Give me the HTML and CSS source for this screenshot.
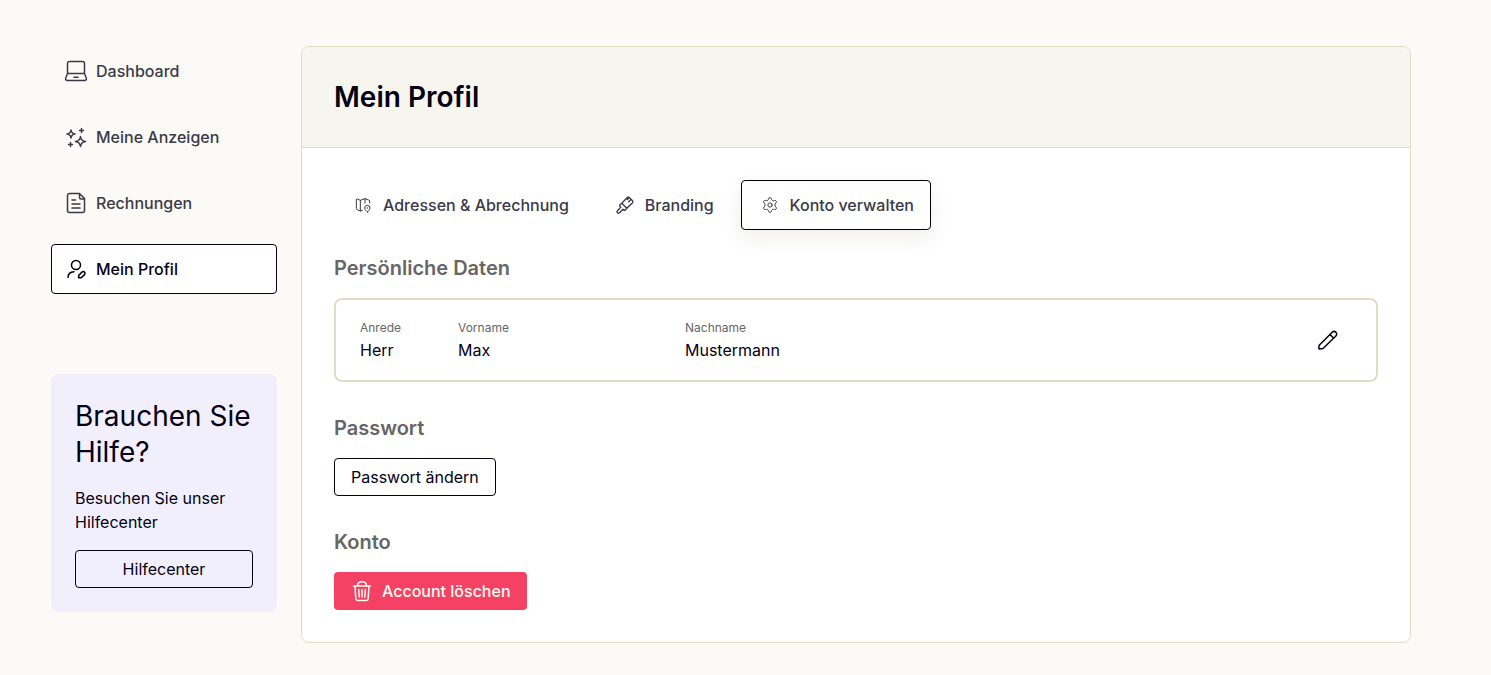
FILE: index.html
```html
<!DOCTYPE html>
<html lang="de">
<head>
    <meta charset="UTF-8">
    <meta name="viewport" content="width=device-width, initial-scale=1.0">
    <title>Mein Profil</title>
    <link rel="stylesheet" href="styles.css">
</head>
<body>
    <div class="page">
        <aside class="sidebar">
            <nav class="side-nav">
                <a href="#" class="nav-link">
                    <svg class="icon" viewBox="0 0 24 24">
                        <path d="M3.500 14.500V4.500a2 2 0 0 1 2-2h13a2 2 0 0 1 2 2v10M3.500 14.500h17L22.300 19a1.800 1.800 0 0 1-1.800 2.500h-17A1.800 1.800 0 0 1 1.700 19zM10 18.200h4"/>
                    </svg>
                    Dashboard
                </a>
                <a href="#" class="nav-link">
                    <svg class="icon" viewBox="0 0 24 24">
                        <path d="M7 5q.5 3.500 4 4-3.500.5-4 4-.5-3.500-4-4 3.500-.5 4-4zM16.500 11.500q.6 4.400 5 5-4.400.6-5 5-.6-4.400-5-5 4.400-.6 5-5z"/>
                        <path d="M17.500 3.500v4M15.500 5.500h4M6.500 17.500v4M4.500 19.500h4"/>
                    </svg>
                    Meine Anzeigen
                </a>
                <a href="#" class="nav-link">
                    <svg class="icon" viewBox="0 0 24 24">
                        <path d="M15.500 2.500h-10a2 2 0 0 0-2 2v15a2 2 0 0 0 2 2h13a2 2 0 0 0 2-2v-12zM15.500 2.500v4a1.500 1.500 0 0 0 1.500 1.500h3.500M8 9h3.500M8 13h8M8 17h8"/>
                    </svg>
                    Rechnungen
                </a>
                <a href="#" class="nav-link active" aria-current="page">
                    <svg class="icon" viewBox="0 0 24 24">
                        <circle cx="12" cy="8" r="4.500"/>
                        <path d="M4 20.500c0-3.500 2.300-5.500 6-5.700M14.500 20.800l.3-2.500 3.200-3.200a1.700 1.700 0 0 1 2.500 2.500l-3.200 3.200z"/>
                    </svg>
                    Mein Profil
                </a>
            </nav>
            <section class="help-box">
                <h2>Brauchen Sie Hilfe?</h2>
                <p>Besuchen Sie unser Hilfecenter</p>
                <button type="button" class="btn btn-block">Hilfecenter</button>
            </section>
        </aside>

        <main class="card">
            <header class="card-header">
                <h1>Mein Profil</h1>
            </header>
            <div class="card-body">
                <div class="tabs" role="tablist">
                    <button type="button" class="tab" role="tab" aria-selected="false">
                        <svg class="icon icon-small" viewBox="0 0 24 24">
                            <path d="M8 21l-4.500-2A2 2 0 0 1 2 17.200V4.500A1.500 1.500 0 0 1 4 3l4 2 7-2.500 5.500 2A2 2 0 0 1 22 6.300V9M8 5v16l3-1M15 2.500V9M18.500 22.500s-4-3.500-4-6a4 4 0 0 1 8 0c0 2.500-4 6-4 6zM18.500 16v1"/>
                        </svg>
                        Adressen &amp; Abrechnung
                    </button>
                    <button type="button" class="tab" role="tab" aria-selected="false">
                        <svg class="icon" viewBox="-1 -1 26 26">
                            <path d="M14.500 3.800a1.500 1.500 0 0 1 2 0l3.700 3.700a1.500 1.500 0 0 1 0 2L14 15.500 8.500 10zM8.500 10l-1.800 1.800a1.200 1.200 0 0 0 0 1.700l.8.8-3.700 3.900a1.600 1.600 0 0 0 2.300 2.300l3.700-3.900.8.8a1.200 1.200 0 0 0 1.700 0L14 15.500M18.500 6l-2.500 2.500M16.500 4L14.500 6"/>
                        </svg>
                        Branding
                    </button>
                    <button type="button" class="tab active" role="tab" aria-selected="true">
                        <svg class="icon icon-small" viewBox="0 0 24 24">
                            <path d="M9.900 2.500a2.200 2.200 0 0 1 4.200 0l.5 1.500a2.300 2.300 0 0 0 2.700 1.500l1.500-.3a2.200 2.200 0 0 1 2.100 3.700l-1 1.400a2.700 2.700 0 0 0 0 3.400l1 1.400a2.200 2.200 0 0 1-2.100 3.700l-1.500-.3a2.300 2.300 0 0 0-2.700 1.500l-.5 1.500a2.200 2.200 0 0 1-4.200 0L9.400 20a2.300 2.300 0 0 0-2.700-1.500l-1.500.3a2.200 2.200 0 0 1-2.100-3.700l1-1.400a2.700 2.700 0 0 0 0-3.400l-1-1.400a2.200 2.200 0 0 1 2.100-3.700l1.500.3A2.300 2.300 0 0 0 9.400 4z"/>
                            <circle cx="12" cy="12" r="3.200"/>
                        </svg>
                        Konto verwalten
                    </button>
                </div>

                <section class="section">
                    <h2>Persönliche Daten</h2>
                    <div class="data-box">
                        <dl class="data-list">
                            <div>
                                <dt>Anrede</dt>
                                <dd>Herr</dd>
                            </div>
                            <div>
                                <dt>Vorname</dt>
                                <dd>Max</dd>
                            </div>
                            <div>
                                <dt>Nachname</dt>
                                <dd>Mustermann</dd>
                            </div>
                        </dl>
                        <button type="button" class="edit-button" aria-label="Bearbeiten">
                            <svg class="icon" viewBox="0 0 24 24">
                                <path d="M3 21v-3.500L16.200 4.300a2.600 2.600 0 0 1 3.700 3.700L7 20.500 3 21zM14 6.500l3.700 3.700"/>
                            </svg>
                        </button>
                    </div>
                </section>

                <section class="section">
                    <h2>Passwort</h2>
                    <button type="button" class="btn">Passwort ändern</button>
                </section>

                <section class="section">
                    <h2>Konto</h2>
                    <button type="button" class="btn btn-danger">
                        <svg class="icon" viewBox="0 0 24 24">
                            <path d="M3.500 7h17M5 7l.8 12.700a2 2 0 0 0 2 1.800h8.400a2 2 0 0 0 2-1.800L19 7M7.500 7c0-2.500 1.500-4.200 4.500-4.200s4.500 1.700 4.500 4.200M8.700 10.500l.5 7.500M12 10.500V18M15.300 10.500l-.5 7.500"/>
                        </svg>
                        Account löschen
                    </button>
                </section>
            </div>
        </main>
    </div>
</body>
</html>
```
FILE: styles.css
```css
* {
    box-sizing: border-box;
}

body {
    margin: 0;
    background-color: #fbfaf6;
    color: #030014;
    font-family: Inter, sans-serif;
    font-size: 16px;
    line-height: 24px;
}

h1, h2, p, dl, dd {
    margin: 0;
}

button {
    font: inherit;
    color: inherit;
    cursor: pointer;
}

.page {
    display: flex;
    align-items: flex-start;
    gap: 24px;
    padding: 46px 80px 32px 51px;
}

.sidebar {
    flex: 0 0 226px;
}

.side-nav {
    display: flex;
    flex-direction: column;
    gap: 16px;
    margin-bottom: 80px;
}

.nav-link {
    display: flex;
    align-items: center;
    gap: 8px;
    padding: 12px;
    border: 1px solid transparent;
    border-radius: 4px;
    color: #3a3a48;
    font-weight: 500;
    text-decoration: none;
}

.nav-link.active {
    background-color: #fff;
    border-color: #030014;
    color: #030014;
}

.icon {
    flex: none;
    width: 24px;
    height: 24px;
    fill: none;
    stroke: currentColor;
    stroke-width: 1.5;
    stroke-linecap: round;
    stroke-linejoin: round;
}

.icon-small {
    width: 16px;
    height: 16px;
    margin: 4px;
    overflow: visible;
}

.help-box {
    padding: 24px;
    border-radius: 8px;
    background-color: #f2effd;
}

.help-box h2 {
    margin-bottom: 16px;
    font-size: 28px;
    font-weight: 400;
    line-height: 36px;
}

.help-box p {
    margin-bottom: 16px;
}

.btn {
    display: inline-flex;
    align-items: center;
    justify-content: center;
    gap: 8px;
    padding: 6px 16px;
    border: 1px solid #030014;
    border-radius: 4px;
    background-color: transparent;
}

.btn-block {
    width: 100%;
}

.btn-danger {
    padding: 7px 16px;
    border: 0;
    background-color: #f44164;
    color: #fffdf0;
    font-weight: 500;
}

.card {
    flex: 1;
    min-width: 0;
    border: 1px solid #e3dcc5;
    border-radius: 8px;
    background-color: #fff;
    overflow: hidden;
}

.card-header {
    padding: 32px;
    border-bottom: 1px solid #e3dcc5;
    background-color: #f7f6ee;
}

.card-header h1 {
    font-size: 28px;
    font-weight: 600;
    line-height: 36px;
}

.card-body {
    display: flex;
    flex-direction: column;
    gap: 32px;
    padding: 32px;
}

.tabs {
    display: flex;
    gap: 10px;
    margin-bottom: -8px;
}

.tab {
    display: flex;
    align-items: center;
    gap: 8px;
    padding: 12px 16px;
    border: 1px solid transparent;
    border-radius: 4px;
    background-color: #fff;
    color: #3a3a48;
    font-weight: 500;
}

.tab.active {
    border-color: #030014;
    box-shadow: 0 8px 20px rgba(60, 50, 20, 0.08);
}

.section h2 {
    margin-bottom: 16px;
    color: #666;
    font-size: 20px;
    font-weight: 600;
    line-height: 28px;
}

.section .btn {
    display: flex;
}

.data-box {
    display: flex;
    align-items: center;
    justify-content: space-between;
    padding: 16px 24px;
    border: 2px solid #e3dcc5;
    border-radius: 8px;
}

.data-list {
    display: grid;
    grid-template-columns: 98px 227px auto;
}

.data-list dt {
    color: #666;
    font-size: 12px;
    line-height: 20px;
}

.edit-button {
    display: flex;
    padding: 12px;
    border: 0;
    background: none;
}
```
